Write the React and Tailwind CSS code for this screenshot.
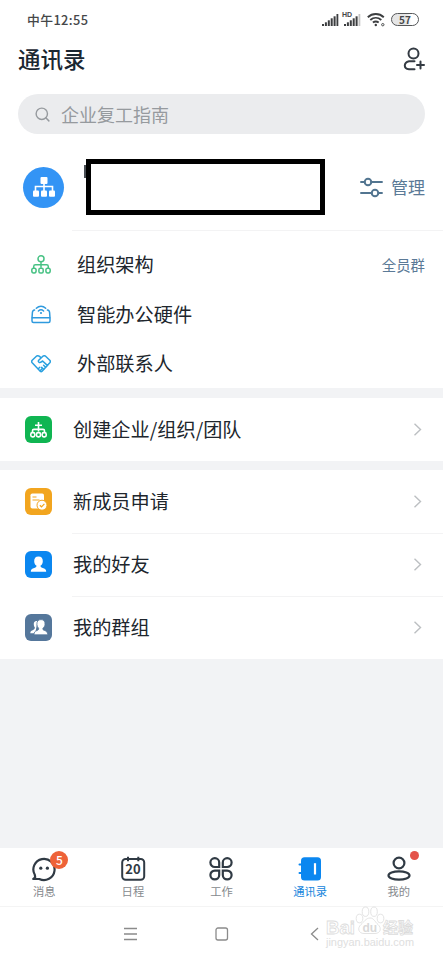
import { Search } from "lucide-react";

function SignalIcon({ weak }) {
  return (
    <svg width="17" height="12" viewBox="0 0 17 12" fill="#3c3e40">
      <rect x="0" y="10" width="2" height="2" />
      <rect x="2.9" y="8.3" width="2" height="3.7" />
      <rect x="5.8" y="6.3" width="2" height="5.7" />
      <rect x="8.7" y="4.3" width="2" height="7.7" />
      <rect x="11.6" y="2.3" width="2" height="9.7" />
      <rect x="14.5" y="0" width="1.8" height="12" fill={weak ? "#c4c4c4" : "#3c3e40"} />
    </svg>
  );
}

function StatusBar() {
  return (
    <div className="flex h-[38px] items-center justify-between pl-[27px] pr-[24px] text-[#454749]">
      <span className="pt-px text-[12.800px] font-medium tracking-[0.4px]">中午12:55</span>
      <div className="flex items-center pt-px">
        <SignalIcon />
        <div className="relative ml-[5px]">
          <span className="absolute -left-[2px] -top-[3px] font-['Liberation_Sans',sans-serif] text-[7px] leading-none font-bold">HD</span>
          <SignalIcon weak />
        </div>
        <svg className="ml-[6px]" width="19" height="15" viewBox="0 0 19 15" fill="none" stroke="#3c3e40" strokeWidth="1.9">
          <path d="M.8 5.2c4.600-4.300 11.400-4.300 16 0" />
          <path d="M3.300 8c3.300-2.900 7.700-2.900 11 0" />
          <path d="M5.900 10.600c1.900-1.500 3.900-1.500 5.800 0" />
          <circle cx="8.800" cy="13" r="1.200" fill="#3c3e40" stroke="none" />
          <circle cx="15.800" cy="12.700" r="1.200" strokeWidth=".9" />
        </svg>
        <div className="ml-[5px] flex h-[13px] w-[28px] items-center justify-center rounded-full border-[1.5px] border-[#555759] bg-linear-to-r from-[#e6e6e6] from-55% to-white to-75% text-[10px] font-bold leading-none">
          57
        </div>
      </div>
    </div>
  );
}

function Header() {
  return (
    <div className="flex h-[44px] items-center justify-between pb-[3px] pl-[18px] pr-[17px]">
      <h1 className="text-[22.5px] font-medium text-[#1b2732]">通讯录</h1>
      <svg width="23" height="24" viewBox="0 0 23 24" fill="none" stroke="#343b43" strokeWidth="2" strokeLinecap="round">
        <circle cx="10.500" cy="6.500" r="5" />
        <path d="M11.500 14.200H6c-5.600 1.300-5.600 7.500 0 8h5.500" />
        <path d="M17.500 14.600v7M14 18.100h7" />
      </svg>
    </div>
  );
}

function OrgCard() {
  return (
    <div className="flex h-[96px] items-center pl-[23px] pr-[18px] pt-[10px]">
      <div className="flex size-[41px] items-center justify-center rounded-full bg-[#3394f5]">
        <svg width="22" height="20" viewBox="0 0 22 20" fill="#fff">
          <rect x="7.500" y="0" width="7" height="7" rx="1" />
          <path d="M2.500 14v-4.500h17V14M11 6v8" fill="none" stroke="#fff" strokeWidth="1.600" />
          <rect x="0" y="13.500" width="6" height="6.300" rx="1" />
          <rect x="8" y="13.500" width="6" height="6.300" rx="1" />
          <rect x="16" y="13.500" width="6" height="6.300" rx="1" />
        </svg>
      </div>
      <div className="relative ml-[22px] h-[56px] w-[239px] border-5 border-black bg-white">
        <span className="absolute -left-[7px] top-[1px] h-[13px] w-[2px] bg-[#4a4f55]" />
      </div>
      <div className="ml-auto flex items-center gap-[8px] text-[#5b7a97]">
        <svg width="23" height="21" viewBox="0 0 23 21" fill="none" stroke="#527590" strokeWidth="1.900" strokeLinecap="round">
          <path d="M1 5h3.800M11 5h11" />
          <circle cx="8" cy="5" r="3.300" />
          <path d="M1 16h11M18.200 16H22" />
          <circle cx="15" cy="16" r="3.300" />
        </svg>
        <span className="text-[17px]">管理</span>
      </div>
    </div>
  );
}

function TreeIcon() {
  return (
    <svg width="20" height="19" viewBox="0 0 20 19" fill="none" stroke="#48c284" strokeWidth="1.500">
      <circle cx="10" cy="3.800" r="3" />
      <path d="M10 6.800v6M2.700 13v-1.500q0-1.700 1.700-1.700h11.200q1.700 0 1.700 1.700V13" />
      <rect x=".8" y="13.200" width="4.300" height="4.700" rx="1.800" />
      <rect x="7.900" y="13.200" width="4.300" height="4.700" rx="1.500" />
      <rect x="14.900" y="13.200" width="4.300" height="4.700" rx="1.800" />
    </svg>
  );
}

function DeviceIcon() {
  return (
    <svg width="20" height="19" viewBox="0 0 20 19" fill="none" stroke="#2f9ade" strokeWidth="1.500" strokeLinecap="round">
      <path d="M3.600 5C2 5.200 1.500 6 1.400 7.500L1 13V16q0 1.500 1.500 1.500h15q1.500 0 1.500-1.500v-3L18.600 7.500c-.1-1.500-.6-2.300-2.200-2.500" />
      <path d="M1.300 12.700h17.400" />
      <path d="M5.300 3.300c2.900-2.900 6.500-2.900 9.400 0M7.400 6c1.600-1.500 3.600-1.500 5.200 0" />
      <circle cx="10" cy="8" r="1.100" fill="#2f9ade" stroke="none" />
    </svg>
  );
}

function HandshakeIcon() {
  return (
    <svg width="20" height="18" viewBox="0 0 20 18" fill="none" stroke="#29a0df" strokeWidth="1.500" strokeLinecap="round" strokeLinejoin="round">
      <path d="M10 2.700L8.100 1.200C7.200.6 6.300.6 5.400 1.200L1.200 5.300c-.7.8-.7 1.700 0 2.500l8 8.400c.6.600 1.300.6 1.900 0l7.700-8.400c.7-.8.7-1.700 0-2.500l-4.200-4.100c-.9-.6-1.800-.6-2.700 0L7.700 5.300c-.7.9-.3 1.900.6 2.200 1.400.4 2.300-.9 3.300-1.500l5 4.600" />
      <path d="M7.300 13.800l1.500-1.500M9.300 15.600l1.500-1.500M14.600 12.200l-2-1.900M12.600 14.300l-2-1.900" />
    </svg>
  );
}

function CreateIcon() {
  return (
    <svg width="27" height="27" viewBox="0 0 27 27" fill="none" stroke="#fff" strokeWidth="1.600">
      <path d="M13.500 6v9.500M10 9.300h7M7.500 16v-1.200q0-1.400 1.400-1.400h9.200q1.400 0 1.400 1.400V16" />
      <rect x="5.800" y="16.600" width="4" height="4.300" rx="1.600" />
      <rect x="11.500" y="16.600" width="4" height="4.300" rx="1.600" />
      <rect x="17.200" y="16.600" width="4" height="4.300" rx="1.600" />
    </svg>
  );
}

function ApplyIcon() {
  return (
    <svg width="27" height="27" viewBox="0 0 27 27" fill="#fff">
      <rect x="5.500" y="5.500" width="13.500" height="15" rx="1.800" />
      <path d="M7.500 9h4M7.500 12h7" stroke="#f2a51f" strokeWidth="1.200" />
      <circle cx="17" cy="17.200" r="5" stroke="#f2a51f" strokeWidth="1" />
      <path d="M14.800 17.200l1.700 1.600 2.900-3" fill="none" stroke="#f2a51f" strokeWidth="1.200" />
    </svg>
  );
}

function FriendIcon() {
  return (
    <svg width="27" height="27" viewBox="0 0 27 27" fill="#fff">
      <path d="M13.500 5.500c3 0 4.500 2 4.300 4.900-.1 1.900-.9 3.200-2.200 4.200-.3 1.300.4 1.900 2.100 2.400 2.300.7 3.500 1.400 3.500 3.800H5.800c0-2.400 1.200-3.100 3.500-3.800 1.700-.5 2.400-1.100 2.100-2.400-1.300-1-2.100-2.300-2.200-4.200-.2-2.900 1.300-4.900 4.300-4.900z" />
    </svg>
  );
}

function GroupIcon() {
  return (
    <svg width="27" height="27" viewBox="0 0 27 27" fill="#fff">
      <path d="M12.500 7c-2.500-.5-4 1-3.700 3.400.1 1.500.5 2.400 1.100 3.200-.1 1.800-1 2.200-2.300 2.700-1.600.6-2.300 1.300-2.300 3h5z" />
      <path d="M16 5.600c2.800 0 4.200 1.800 4 4.700-.1 1.800-.9 3-2.100 3.900-.3 1.400.4 1.800 1.600 2.300 2 .7 3.200 1.600 3.200 4.300H9c0-2.700 1-3.600 3-4.300 1.200-.5 1.900-.9 1.600-2.300-1-.9-1.600-2.100-1.700-3.900C11.700 7.400 13.200 5.600 16 5.600z" stroke="#55779b" strokeWidth=".8" />
    </svg>
  );
}

function PlainRow({ icon, label, extra }) {
  return (
    <div className="flex h-[49.500px] items-center pl-[31px] pr-[18px]">
      <span className="flex w-[20px] justify-center">{icon}</span>
      <span className="ml-[26px] text-[19.200px]">{label}</span>
      {extra && <span className="ml-auto text-[14.400px] text-[#5b7a97]">{extra}</span>}
    </div>
  );
}

function LinkRow({ icon, color, label, height = "h-[63px]" }) {
  return (
    <div className={`flex items-center pb-px pl-[25px] pr-[21px] ${height}`}>
      <span className={`size-[27px] rounded-[6px] ${color}`}>{icon}</span>
      <span className="ml-[21px] text-[19.200px]">{label}</span>
      <svg className="ml-auto" width="9" height="13" viewBox="0 0 9 13" fill="none" stroke="#bcbfc2" strokeWidth="1.400">
        <path d="M1.500 .8l6 5.700-6 5.700" />
      </svg>
    </div>
  );
}

const tabs = [
  {
    label: "消息",
    badge: (
      <span className="absolute -top-[5px] left-[19px] flex size-[18px] items-center justify-center rounded-full bg-[#ee6238] text-[12px] font-medium leading-none text-white">
        5
      </span>
    ),
    icon: (
      <svg width="26" height="26" viewBox="0 0 26 26" fill="none" stroke="#303a44" strokeWidth="2.200" strokeLinejoin="round">
        <path d="M3.800 18.800A10.600 10.600 0 1 1 8.300 23H2.200l2-1.800z" />
        <circle cx="9.800" cy="12.200" r="1.600" fill="#303a44" stroke="none" />
        <circle cx="16.400" cy="12.200" r="1.600" fill="#303a44" stroke="none" />
      </svg>
    ),
  },
  {
    label: "日程",
    icon: (
      <span className="relative">
        <svg width="26" height="26" viewBox="0 0 26 26" fill="none" stroke="#303a44" strokeWidth="2">
          <rect x="2.200" y="3" width="22" height="20.800" rx="3.500" />
          <path d="M8 .8v4.400M18.300 .8v4.400" />
        </svg>
        <span className="absolute inset-x-0 top-[6px] text-center text-[13px] font-bold leading-[14px] text-[#303a44]">20</span>
      </span>
    ),
  },
  {
    label: "工作",
    icon: (
      <svg width="26" height="26" viewBox="0 0 26 26" fill="none" stroke="#303a44" strokeWidth="2.200">
        <path d="M6.800 2.200a4.400 4.400 0 0 1 4.400 4.400V11H6.800a4.400 4.400 0 0 1 0-8.800z" />
        <path d="M19.200 2.200a4.400 4.400 0 0 1 0 8.800h-4.400V6.600a4.400 4.400 0 0 1 4.400-4.400z" />
        <path d="M6.800 14.600h4.400V19a4.400 4.400 0 1 1-4.400-4.400z" />
        <path d="M14.800 14.600h4.400a4.400 4.400 0 1 1-4.400 4.400z" />
      </svg>
    ),
  },
  {
    label: "通讯录",
    active: true,
    icon: (
      <svg width="26" height="26" viewBox="0 0 26 26" fill="#0b87f0">
        <rect x="4" y="1.200" width="20" height="23.300" rx="3.500" />
        <path d="M2.500 8.500h4M2.500 17h4" stroke="#0b87f0" strokeWidth="2" strokeLinecap="round" />
        <path d="M18 7.200v11.300" stroke="#fff" strokeWidth="2.200" />
      </svg>
    ),
  },
  {
    label: "我的",
    badge: <span className="absolute -top-[5px] left-[24px] size-[9px] rounded-full bg-[#e4534a]" />,
    icon: (
      <svg width="26" height="26" viewBox="0 0 26 26" fill="none" stroke="#303a44" strokeWidth="2.200">
        <circle cx="13" cy="7" r="5.400" />
        <ellipse cx="13" cy="19.500" rx="10.500" ry="4.200" />
      </svg>
    ),
  },
];

function TabBar() {
  return (
    <div className="grid h-[59px] grid-cols-5 border-b border-[#f4f4f4] bg-white pt-[8px]">
      {tabs.map((tab) => (
        <div key={tab.label} className="flex flex-col items-center">
          <div className="relative h-[26px] w-[26px]">
            {tab.icon}
            {tab.badge}
          </div>
          <span className={`mt-[1px] text-[11.300px] leading-[16px] ${tab.active ? "text-[#1685dc]" : "text-[#85898d]"}`}>
            {tab.label}
          </span>
        </div>
      ))}
    </div>
  );
}

function Watermark() {
  return (
    <svg className="absolute left-[325px] top-[906px]" width="94" height="46" viewBox="0 0 94 46" fill="#fff" stroke="#dcdcdc" strokeWidth=".8">
      <ellipse cx="34.500" cy="12.500" rx="3.300" ry="4.300" />
      <ellipse cx="40.500" cy="5.700" rx="3.300" ry="4.700" />
      <ellipse cx="49" cy="5.700" rx="3.300" ry="4.700" />
      <ellipse cx="55.500" cy="12.500" rx="3.300" ry="4.300" />
      <path d="M45 12c4 0 5 4 8 6.500 4 3.500 2.500 9-3 9H39c-5.500 0-7-5.500-3-9C39 16 41 12 45 12z" />
      <g fontFamily="Liberation Sans, sans-serif" fontWeight="bold">
        <text x="1" y="28" fontSize="19" textLength="29" lengthAdjust="spacingAndGlyphs">Bai</text>
        <text x="37.500" y="25.500" fontSize="12" fill="#d9d9d9" stroke="none">du</text>
      </g>
      <text x="58" y="26.500" fontFamily="Noto Sans CJK SC, sans-serif" fontWeight="bold" fontSize="15">经验</text>
      <text x="1" y="40" fontFamily="Liberation Sans, sans-serif" fontSize="10.500" fill="#dedede" stroke="none" textLength="88" lengthAdjust="spacingAndGlyphs">
        jingyan.baidu.com
      </text>
    </svg>
  );
}

export default function App() {
  return (
    <div className="relative flex h-[960px] w-[443px] flex-col overflow-hidden bg-[#f2f3f5] font-['Noto_Sans_CJK_SC',sans-serif] text-[#20262d]">
      <div className="h-[388px] bg-white">
        <StatusBar />
        <Header />
        <div className="mx-[18px] mt-[12px] flex h-[40px] items-center rounded-full bg-[#ebecee] pl-[16px] text-[#969a9e]">
          <Search size={17} strokeWidth={2} />
          <span className="ml-[10px] text-[18px]">企业复工指南</span>
        </div>
        <OrgCard />
        <div className="ml-[72px] h-px bg-[#f3f3f4]" />
        <div className="pt-[9px]">
          <PlainRow icon={<TreeIcon />} label="组织架构" extra="全员群" />
          <PlainRow icon={<DeviceIcon />} label="智能办公硬件" />
          <PlainRow icon={<HandshakeIcon />} label="外部联系人" />
        </div>
      </div>

      <div className="mt-[10px] bg-white">
        <LinkRow icon={<CreateIcon />} color="bg-[#10b552]" label="创建企业/组织/团队" />
      </div>

      <div className="mt-[9px] bg-white">
        <LinkRow icon={<ApplyIcon />} color="bg-[#f2a51f]" label="新成员申请" />
        <div className="ml-[72px] h-px bg-[#f3f3f4]" />
        <LinkRow icon={<FriendIcon />} color="bg-[#0b87f0]" label="我的好友" height="h-[62px]" />
        <div className="ml-[72px] h-px bg-[#f3f3f4]" />
        <LinkRow icon={<GroupIcon />} color="bg-[#55779b]" label="我的群组" height="h-[62px]" />
      </div>

      <div className="mt-auto">
        <TabBar />
        {/* system navigation */}
        <div className="flex h-[53px] items-center bg-white pl-[123px]">
          <svg width="202" height="16" viewBox="0 0 202 16" fill="none" stroke="#8b8b8b" strokeWidth="1.300">
            <path d="M1 2.500h13M1 8h13M1 13.500h13" />
            <rect x="93" y="2" width="11.500" height="12" rx="2" />
            <path d="M195 2l-6.500 6 6.500 6" />
          </svg>
        </div>
      </div>

      <Watermark />
    </div>
  );
}
